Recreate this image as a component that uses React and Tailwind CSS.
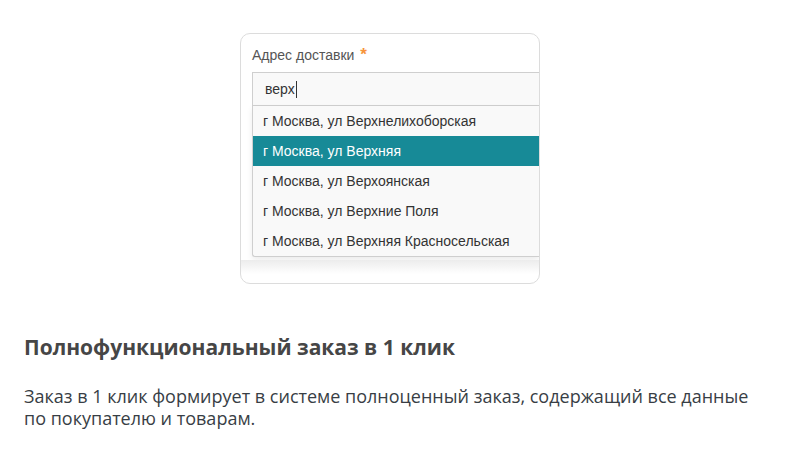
const items = [
  'г Москва, ул Верхнелихоборская',
  'г Москва, ул Верхняя',
  'г Москва, ул Верхоянская',
  'г Москва, ул Верхние Поля',
  'г Москва, ул Верхняя Красносельская',
];

const AddressCard = () => {
  return (
    <div className="ml-[240px] w-[300px] h-[251px] border border-[#dcdcdc] rounded-[10px] overflow-hidden bg-white font-['Liberation_Sans',Arial,sans-serif]">
      <div className="pl-[11px] pt-[12px]">
        <div className="text-[14px] leading-[18px] text-[#555]">
          Адрес доставки <span className="ml-[2px] text-[#f7943b] text-[17px] font-bold">*</span>
        </div>
        <div className="mt-[8px] h-[34px] border border-[#cfcfcf] border-r-0 bg-[#f9f9f9] flex items-center pl-[12px] text-[14px] text-[#333]">
          верх<span className="inline-block w-px h-[17px] bg-[#333] ml-px"></span>
        </div>
        <div className="border border-t-0 border-r-0 border-[#cfcfcf] bg-[#f9f9f9] rounded-bl-[3px] shadow-[0_3px_6px_rgba(0,0,0,0.08)]">
          {items.map((item, i) => (
            <div
              key={item}
              className={
                i === 1
                  ? 'h-[30px] flex items-center pl-[10px] text-[14px] text-white bg-[#178a97]'
                  : 'h-[30px] flex items-center pl-[10px] text-[14px] text-[#333]'
              }
            >
              {item}
            </div>
          ))}
        </div>
      </div>
      <div className="mt-[3px] h-[14px] bg-gradient-to-b from-[#ececec] to-white"></div>
    </div>
  );
};

export default function App() {
  return (
    <div className="w-[798px] h-[470px] bg-white pt-[33px] font-['Open_Sans',sans-serif]">
      <AddressCard />
      <h2 className="mt-[49px] ml-[24px] text-[21px] leading-[28px] font-bold text-[#464646]">
        Полнофункциональный заказ в 1 клик
      </h2>
      <p className="mt-[24px] ml-[24px] w-[740px] text-[18px] leading-[22px] text-[#383e45]">
        Заказ в 1 клик формирует в системе полноценный заказ, содержащий все данные по покупателю и товарам.
      </p>
    </div>
  );
}
